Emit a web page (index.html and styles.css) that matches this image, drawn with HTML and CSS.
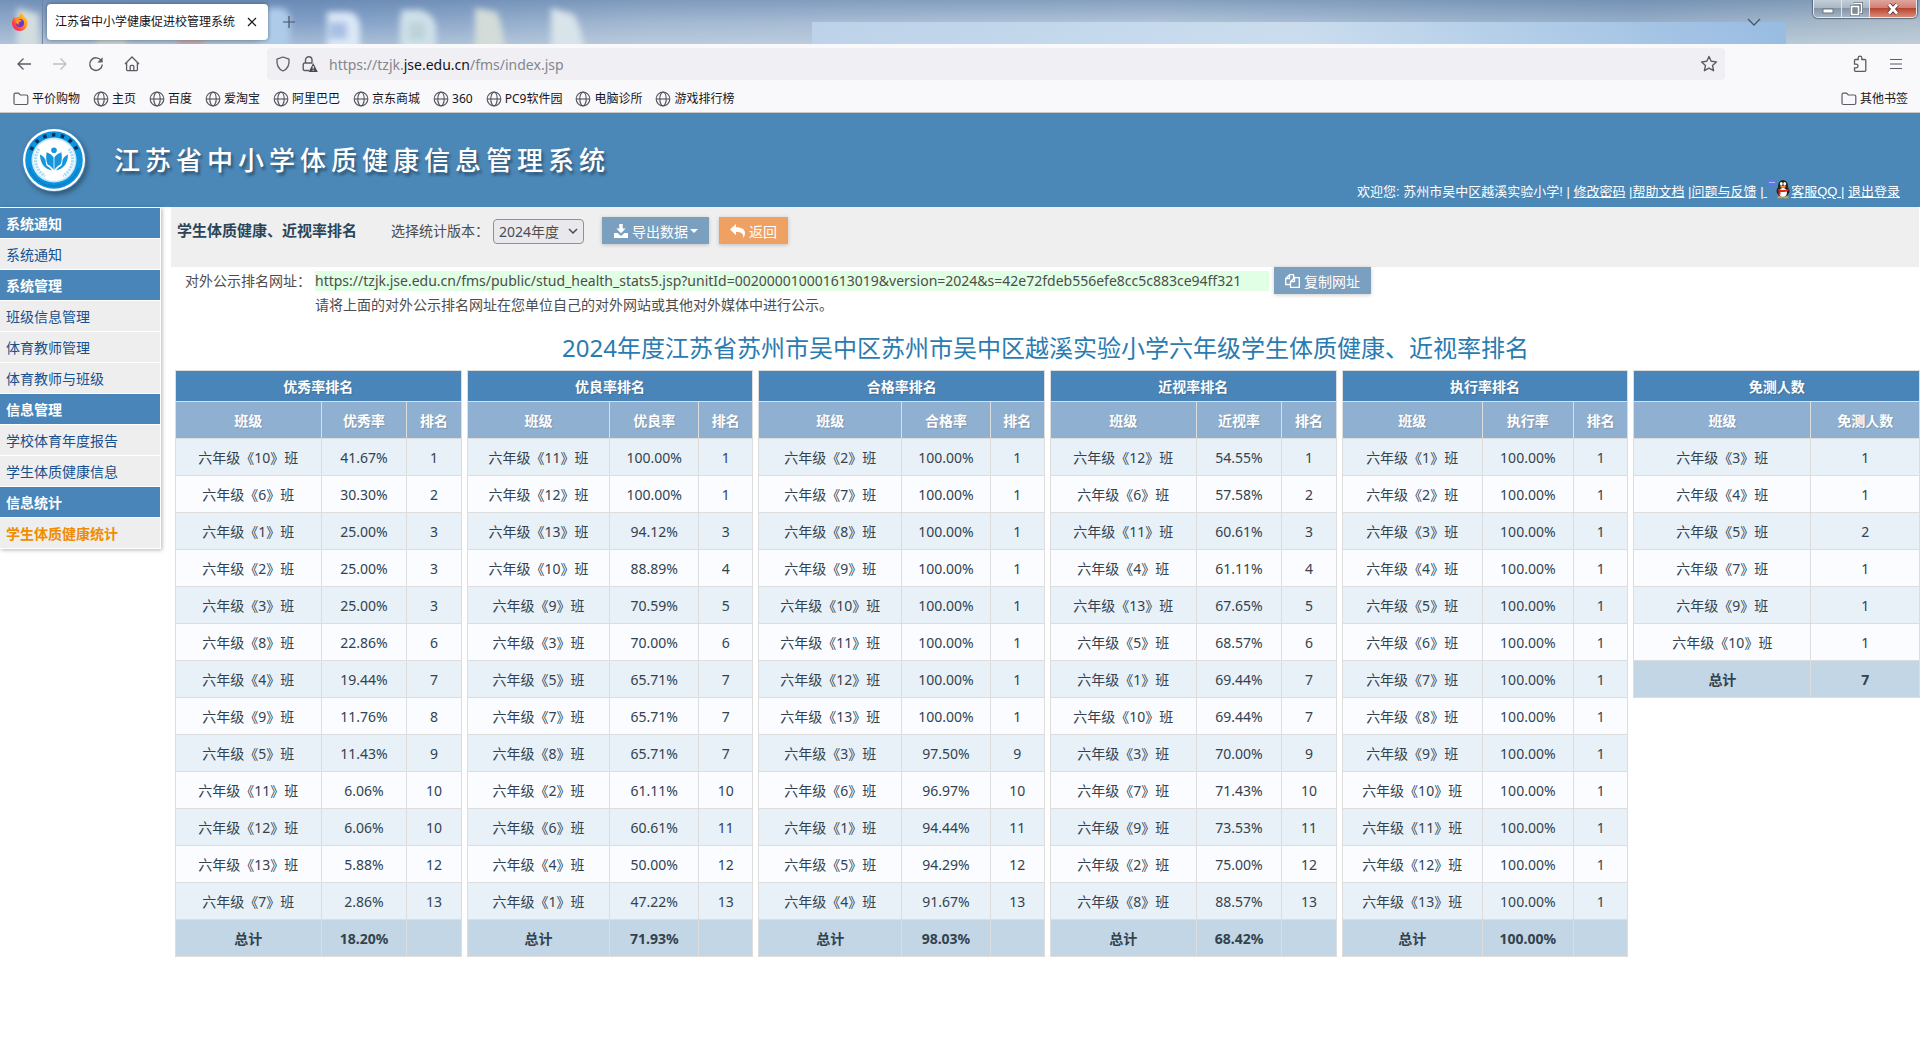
FILE: index.html
```html
<!DOCTYPE html>
<html lang="zh-CN">
<head>
  <meta charset="UTF-8">
  <meta name="viewport" content="width=device-width, initial-scale=1.0">
  <title>江苏省中小学健康促进校管理系统</title>
  <link rel="stylesheet" href="styles.css">
</head>
<body>
  <svg class="sprite" aria-hidden="true">
    <symbol id="globe" viewBox="0 0 16 16">
      <g fill="none" stroke="#5b5b66" stroke-width="1.2">
        <circle cx="8" cy="8" r="6.8"/>
        <ellipse cx="8" cy="8" rx="3.2" ry="6.8"/>
        <path d="M1.2 8h13.6"/>
      </g>
    </symbol>
    <symbol id="folder" viewBox="0 0 16 16">
      <path d="M1 3.6a1.5 1.5 0 0 1 1.500-1.500h3l1.800 1.900h6a1.500 1.500 0 0 1 1.500 1.500v6.500a1.500 1.500 0 0 1-1.500 1.500h-10.800a1.500 1.500 0 0 1-1.500-1.500z" fill="none" stroke="#5b5b66" stroke-width="1.2"/>
    </symbol>
  </svg>

  <div class="tab-strip">
    <!-- desktop icons showing through the glass -->
    <svg class="glass-bg" width="620" height="44" viewBox="0 0 620 44" aria-hidden="true">
      <defs><filter id="soft" x="-10%" y="-50%" width="120%" height="200%"><feGaussianBlur stdDeviation="3"/></filter></defs>
      <g filter="url(#soft)">
        <path d="M17 8l22 6v34H17z" fill="#d3dde0"/>
        <path d="M96 38h30v10H96z" fill="#c9d2cf"/>
        <path d="M178 40h26v8h-26z" fill="#c99f9a"/>
        <rect x="258" y="8" width="32" height="44" rx="10" fill="#aecbe9"/>
        <path d="M327 12h22q11 2 11 16v24h-33z" fill="#dbe8f6"/>
        <rect x="329" y="22" width="18" height="17" fill="#a9c0e4"/>
        <path d="M402 10h18q15 4 16 18v24h-36V20z" fill="#cfe0e8"/>
        <rect x="409" y="22" width="16" height="18" fill="#bdd3da"/>
        <path d="M475 8l22 4q6 14 8 40h-30z" fill="#d3dcd9"/>
        <path d="M551 8l22 6q9 12 11 38h-33z" fill="#d8e3ea"/>
      </g>
    </svg>
    <div class="glass-btns">
      <button class="win-btn" aria-label="最小化"><svg width="12" height="12" viewBox="0 0 12 12"><rect x="1" y="6" width="10" height="4" fill="#fff" stroke="#6b7480" stroke-width="1"/></svg></button>
      <button class="win-btn" aria-label="还原"><svg width="14" height="14" viewBox="0 0 14 14"><path d="M4.500 1.500h8v9h-2" fill="none" stroke="#5c6672" stroke-width="3"/><path d="M4.500 1.500h8v9h-2" fill="none" stroke="#fff" stroke-width="1.500"/><rect x="2.500" y="4.500" width="7" height="8" fill="#7d8b9b" stroke="#5c6672" stroke-width="3"/><rect x="2.500" y="4.500" width="7" height="8" fill="none" stroke="#fff" stroke-width="1.800"/></svg></button>
      <button class="win-btn win-close" aria-label="关闭"><svg width="14" height="12" viewBox="0 0 14 12"><path d="M3 1.500l8 9M11 1.500l-8 9" stroke="#5a3030" stroke-width="4.500"/><path d="M3 1.500l8 9M11 1.500l-8 9" stroke="#fff" stroke-width="2.800"/></svg></button>
    </div>
    <div class="fx">
      <svg width="18" height="20" viewBox="0 0 18 20">
        <defs><linearGradient id="fire" x1="1" y1="0" x2="0" y2="1"><stop offset="0" stop-color="#ffe340"/><stop offset=".4" stop-color="#ff9a20"/><stop offset=".75" stop-color="#ff3a4a"/><stop offset="1" stop-color="#e21e70"/></linearGradient></defs>
        <path d="M10.500 1c2 1.500 2.500 3 3 4 1.500.8 3 3.500 3 6 0 4.500-3.500 8-7.700 8S1 15.500 1 11c0-3 1-5 2-6.500.2 1 .5 1.500 1 2 1-1 2.500-1.300 3.500-1.200.7-1.600 1.500-3.300 3-4.300z" fill="url(#fire)"/>
        <circle cx="9" cy="11" r="4" fill="#6a35d8"/>
        <path d="M4.500 7.500c1.500-1 3-.8 4.500.5l2 .5-2 1.500c-1.500.3-2 1.500-.5 2.500-2 .4-4.500-1.500-4-5z" fill="#ff9520"/>
      </svg>
    </div>
    <div class="tab">
      <span>江苏省中小学健康促进校管理系统</span>
      <button class="plain" aria-label="关闭标签页"><svg width="10" height="10" viewBox="0 0 10 10"><path d="M1 1l8 8M9 1l-8 8" stroke="#15141a" stroke-width="1.200"/></svg></button>
    </div>
    <button class="plain new-tab" aria-label="新建标签页"><svg width="12" height="12" viewBox="0 0 12 12"><path d="M6 0v12M0 6h12" stroke="#4a5568" stroke-width="1.200"/></svg></button>
    <button class="plain all-tabs" aria-label="列出所有标签页"><svg width="14" height="8" viewBox="0 0 14 8"><path d="M1 1l6 6 6-6" fill="none" stroke="#4a5568" stroke-width="1.300"/></svg></button>
  </div>

  <div class="nav-bar">
    <button class="tool" aria-label="后退"><svg width="16" height="16" viewBox="0 0 16 16"><path d="M15 8H2M7.500 2.500L2 8l5.500 5.500" fill="none" stroke="#5b5b66" stroke-width="1.300"/></svg></button>
    <button class="tool" aria-label="前进"><svg width="16" height="16" viewBox="0 0 16 16"><path d="M1 8h13M8.500 2.500L14 8l-5.500 5.500" fill="none" stroke="#bdbdc4" stroke-width="1.300"/></svg></button>
    <button class="tool" aria-label="刷新"><svg width="16" height="16" viewBox="0 0 16 16"><path d="M13.500 5A6.300 6.300 0 1 0 14.300 8.500" fill="none" stroke="#5b5b66" stroke-width="1.400"/><path d="M14.600 1.200v5.300H9.300z" fill="#5b5b66"/></svg></button>
    <button class="tool" aria-label="主页"><svg width="16" height="16" viewBox="0 0 16 16"><path d="M1 8l7-7 7 7M2.600 6.500v7a1.200 1.200 0 0 0 1.200 1.200h8.400a1.200 1.200 0 0 0 1.200-1.200v-7M6.200 14.500V10.300a1 1 0 0 1 1-1h1.600a1 1 0 0 1 1 1v4.200" fill="none" stroke="#5b5b66" stroke-width="1.300"/></svg></button>
    <div class="url-bar">
      <svg width="16" height="16" viewBox="0 0 16 16"><path d="M8 1l6 2.200c.5 5-1.500 9.800-6 11.800C3.500 13 1.500 8.200 2 3.200z" fill="none" stroke="#5b5b66" stroke-width="1.300" stroke-linejoin="round"/></svg>
      <svg width="16" height="16" viewBox="0 0 16 16"><path d="M3.500 7V4a3 3 0 0 1 6.500 0v3M7 14.500H2.500A1.300 1.300 0 0 1 1.200 13.200V8.300A1.300 1.300 0 0 1 2.500 7H10.500" fill="none" stroke="#5b5b66" stroke-width="1.400"/><path d="M11.200 7l4.600 9H6.600z" fill="#4a4a55"/><path d="M11.200 10v2.800M11.200 13.700v1" stroke="#fff" stroke-width="1.100"/></svg>
      <span class="url">https://tzjk.<b>jse.edu.cn</b>/fms/index.jsp</span>
      <svg class="star" width="18" height="18" viewBox="0 0 18 18"><path d="M9 1.500l2.200 4.800 5.200.6-3.900 3.500 1.100 5.300L9 13.100l-4.600 2.600 1.100-5.300L1.600 6.900l5.200-.6z" fill="none" stroke="#5b5b66" stroke-width="1.400" stroke-linejoin="round"/></svg>
    </div>
    <button class="tool" aria-label="扩展"><svg width="16" height="18" viewBox="0 0 16 18"><path d="M2.500 7.500V5.500a1 1 0 0 1 1-1h2.700V3a1.800 1.800 0 0 1 3.600 0v1.500h3a1 1 0 0 1 1 1v9.800a1 1 0 0 1-1 1H3.500a1 1 0 0 1-1-1v-2.500h1.700a1.800 1.800 0 0 0 0-3.600H2.500z" fill="none" stroke="#5b5b66" stroke-width="1.300"/></svg></button>
    <button class="tool" aria-label="菜单"><svg width="14" height="12" viewBox="0 0 14 12"><path d="M1 1.500h12M1 6h12M1 10.500h12" stroke="#5b5b66" stroke-width="1.200"/></svg></button>
  </div>

  <div class="bookmarks">
    <a href="#"><svg width="16" height="16"><use href="#folder"/></svg>平价购物</a>
    <a href="#"><svg width="16" height="16"><use href="#globe"/></svg>主页</a>
    <a href="#"><svg width="16" height="16"><use href="#globe"/></svg>百度</a>
    <a href="#"><svg width="16" height="16"><use href="#globe"/></svg>爱淘宝</a>
    <a href="#"><svg width="16" height="16"><use href="#globe"/></svg>阿里巴巴</a>
    <a href="#"><svg width="16" height="16"><use href="#globe"/></svg>京东商城</a>
    <a href="#"><svg width="16" height="16"><use href="#globe"/></svg>360</a>
    <a href="#"><svg width="16" height="16"><use href="#globe"/></svg>PC9软件园</a>
    <a href="#"><svg width="16" height="16"><use href="#globe"/></svg>电脑诊所</a>
    <a href="#"><svg width="16" height="16"><use href="#globe"/></svg>游戏排行榜</a>
    <a class="other" href="#"><svg width="16" height="16"><use href="#folder"/></svg>其他书签</a>
  </div>

  <header class="header">
    <svg class="logo" width="64" height="64" viewBox="0 0 64 64">
      <circle cx="32" cy="32" r="31" fill="#fff"/>
      <circle cx="32" cy="32" r="28.800" fill="#0d93de"/>
      <path d="M9 22A25 25 0 0 1 55 22" fill="none" stroke="#0c2f55" stroke-width="3.500" stroke-dasharray="3.500 5.500"/>
      <path d="M7.500 40A25.700 25.700 0 0 0 56.500 40" fill="none" stroke="#0a6fb4" stroke-width="2" stroke-dasharray="1 1"/>
      <circle cx="32" cy="32" r="22.500" fill="#c4e8fb"/>
      <circle cx="32" cy="32" r="20.800" fill="#fff"/>
      <g fill="none" stroke="#a5daf7" stroke-width="3" stroke-dasharray="2 1"><path d="M17 21a18.500 18.500 0 0 0 6 27"/><path d="M47 21a18.500 18.500 0 0 1-6 27"/></g>
      <g fill="#1796dd">
        <circle cx="32" cy="22.300" r="2.800"/>
        <path d="M31.600 42V29.500c-1.500-2.500-4-4-7-5.200-.8 5-.5 9 1 12.200 2.500 1.200 4.500 3 6 5.500z"/>
        <path d="M32.400 42V29.500c1.500-2.500 4-4 7-5.200.8 5 .5 9-1 12.200-2.500 1.200-4.500 3-6 5.500z"/>
        <path d="M23.500 32c-1-2.500-3-4.500-5.500-5.500 0 7 3 14 12 16-1.500-2-3-3.500-5.300-4.700-.7-1.800-1.200-3.800-1.200-5.800z"/>
        <path d="M40.500 32c1-2.500 3-4.500 5.500-5.500 0 7-3 14-12 16 1.500-2 3-3.500 5.300-4.700.7-1.800 1.200-3.800 1.200-5.800z"/>
      </g>
    </svg>
    <h1>江苏省中小学体质健康信息管理系统</h1>
    <div class="user-links">
      欢迎您: 苏州市吴中区越溪实验小学! | <a href="#">修改密码</a> |<a href="#">帮助文档</a> |<a href="#">问题与反馈</a> |<a href="#">&nbsp;<svg width="24" height="20" viewBox="0 0 24 20"><ellipse cx="5" cy="3.500" rx="4.500" ry="3.200" fill="#5a7be0"/><path d="M2.500 3.500h5" stroke="#fff" stroke-dasharray="1 1"/><ellipse cx="16" cy="7" rx="5" ry="6" fill="#222"/><ellipse cx="16" cy="12" rx="6.500" ry="5.500" fill="#222"/><ellipse cx="16" cy="13.500" rx="4" ry="4.500" fill="#fff"/><ellipse cx="14.300" cy="4.800" rx="1.400" ry="1.900" fill="#fff"/><ellipse cx="17.700" cy="4.800" rx="1.400" ry="1.900" fill="#fff"/><ellipse cx="16" cy="7.800" rx="3" ry="1.100" fill="#f5a01c"/><path d="M10.500 9.500c3 2 8 2 11 0v2.200c-3 1.500-6 1.600-8 1.200v2.600h-2V12z" fill="#e2231a"/><path d="M10.500 17.500h5v1.800h-5zM16.500 17.500h5v1.800h-5z" fill="#f5a01c"/></svg>客服QQ&nbsp;</a>| <a href="#">退出登录</a>
    </div>
  </header>

  <div class="page">
    <nav class="sidebar">
      <h3>系统通知</h3>
      <a href="#">系统通知</a>
      <h3>系统管理</h3>
      <a href="#">班级信息管理</a>
      <a href="#">体育教师管理</a>
      <a href="#">体育教师与班级</a>
      <h3>信息管理</h3>
      <a href="#">学校体育年度报告</a>
      <a href="#">学生体质健康信息</a>
      <h3>信息统计</h3>
      <a href="#" class="active">学生体质健康统计</a>
    </nav>

    <main class="main">
      <div class="toolbar">
        <h2>学生体质健康、近视率排名</h2>
        <label for="version">选择统计版本：</label>
        <div class="select-wrap">
          <select id="version"><option>2024年度</option></select>
          <svg width="10" height="6" viewBox="0 0 10 6"><path d="M1 1l4 4 4-4" fill="none" stroke="#4c4c55" stroke-width="1.500"/></svg>
        </div>
        <button class="btn export"><svg width="14" height="14" viewBox="0 0 14 14"><path d="M5.300 0h3.400v4.500h3L7 9.300 2.300 4.500h3zM0 9h3.600L7 12l3.400-3H14v5H0z" fill="#fff"/></svg>导出数据<i class="caret"></i></button>
        <button class="btn btn-orange"><svg width="15" height="14" viewBox="0 0 15 14"><path d="M6 0v3.300c6 0 9 2.200 9 6 0 2-.8 3.500-1.800 4.700.5-4.200-1.500-6-7.200-6v3.300L0 5.600z" fill="#fff"/></svg>返回</button>
      </div>

      <div class="publish">
        <span class="publish-label">对外公示排名网址：</span>
        <div class="publish-url">
          <span class="link-text">https://tzjk.jse.edu.cn/fms/public/stud_health_stats5.jsp?unitId=002000010001613019&amp;version=2024&amp;s=42e72fdeb556efe8cc5c883ce94ff321</span>
          <button class="btn"><svg width="15" height="14" viewBox="0 0 15 14"><path d="M4.500.7h4v3.500M4.500.7L.7 4.500v6h4.800M.7 4.500h3.800V.7M9.500 3.700h4.800v9.600H5.500V7.500l4-3.800v3.800h-4" fill="none" stroke="#fff" stroke-width="1.300"/></svg>复制网址</button>
        </div>
        <p>请将上面的对外公示排名网址在您单位自己的对外网站或其他对外媒体中进行公示。</p>
      </div>

      <h2 class="report-title">2024年度江苏省苏州市吴中区苏州市吴中区越溪实验小学六年级学生体质健康、近视率排名</h2>
      <div class="tables" id="tables"></div>
    </main>
  </div>

  <script>
    // rows: [class number, value, rank]
    const tables = [
      { title: '优秀率排名', cols: ['班级', '优秀率', '排名'], size: 'w-a', total: '18.20%', rows: [
        [10, '41.67%', 1], [6, '30.30%', 2], [1, '25.00%', 3], [2, '25.00%', 3], [3, '25.00%', 3],
        [8, '22.86%', 6], [4, '19.44%', 7], [9, '11.76%', 8], [5, '11.43%', 9], [11, '6.06%', 10],
        [12, '6.06%', 10], [13, '5.88%', 12], [7, '2.86%', 13]] },
      { title: '优良率排名', cols: ['班级', '优良率', '排名'], size: 'w-b', total: '71.93%', rows: [
        [11, '100.00%', 1], [12, '100.00%', 1], [13, '94.12%', 3], [10, '88.89%', 4], [9, '70.59%', 5],
        [3, '70.00%', 6], [5, '65.71%', 7], [7, '65.71%', 7], [8, '65.71%', 7], [2, '61.11%', 10],
        [6, '60.61%', 11], [4, '50.00%', 12], [1, '47.22%', 13]] },
      { title: '合格率排名', cols: ['班级', '合格率', '排名'], size: 'w-b', total: '98.03%', rows: [
        [2, '100.00%', 1], [7, '100.00%', 1], [8, '100.00%', 1], [9, '100.00%', 1], [10, '100.00%', 1],
        [11, '100.00%', 1], [12, '100.00%', 1], [13, '100.00%', 1], [3, '97.50%', 9], [6, '96.97%', 10],
        [1, '94.44%', 11], [5, '94.29%', 12], [4, '91.67%', 13]] },
      { title: '近视率排名', cols: ['班级', '近视率', '排名'], size: 'w-a', total: '68.42%', rows: [
        [12, '54.55%', 1], [6, '57.58%', 2], [11, '60.61%', 3], [4, '61.11%', 4], [13, '67.65%', 5],
        [5, '68.57%', 6], [1, '69.44%', 7], [10, '69.44%', 7], [3, '70.00%', 9], [7, '71.43%', 10],
        [9, '73.53%', 11], [2, '75.00%', 12], [8, '88.57%', 13]] },
      { title: '执行率排名', cols: ['班级', '执行率', '排名'], size: 'w-c', total: '100.00%',
        rows: [1, 2, 3, 4, 5, 6, 7, 8, 9, 10, 11, 12, 13].map(n => [n, '100.00%', 1]) },
      { title: '免测人数', cols: ['班级', '免测人数'], size: 'w-d', total: '7', rows: [
        [3, 1], [4, 1], [5, 2], [7, 1], [9, 1], [10, 1]] }
    ];

    document.getElementById('tables').innerHTML = tables.map(t => {
      const body = t.rows.map(([cls, ...rest]) =>
        `<tr><td>六年级《${cls}》班</td>${rest.map(v => `<td>${v}</td>`).join('')}</tr>`).join('');
      const last = t.cols.length === 3 ? '<td></td>' : '';
      return `<table class="rank ${t.size}">
        <colgroup>${t.cols.map(() => '<col>').join('')}</colgroup>
        <thead>
          <tr class="caption"><th colspan="${t.cols.length}">${t.title}</th></tr>
          <tr>${t.cols.map(c => `<th>${c}</th>`).join('')}</tr>
        </thead>
        <tbody>${body}</tbody>
        <tfoot><tr><td>总计</td><td>${t.total}</td>${last}</tr></tfoot>
      </table>`;
    }).join('');
  </script>
</body>
</html>
```
FILE: styles.css
```css
* {
  box-sizing: border-box;
}
body {
  margin: 0;
  font-family: "Noto Sans", "Noto Sans CJK SC", sans-serif;
  font-size: 14px;
  line-height: 20px;
  color: #4d4d4d;
  background: #fff;
}
h1, h2, h3, p {
  margin: 0;
}
button, select {
  font-family: inherit;
  font-size: 14px;
}
svg {
  flex: none;
}
.sprite {
  display: none;
}

/* browser window */
.tab-strip {
  position: relative;
  display: flex;
  align-items: center;
  height: 44px;
  overflow: hidden;
  background:
    linear-gradient(to right, rgba(190, 212, 235, 0.9), rgba(205, 223, 240, 0.9) 50%, rgba(150, 188, 228, 0.9)) 812px 22px / 974px 22px no-repeat,
    linear-gradient(to bottom, rgba(80, 115, 160, 0.4), rgba(255, 255, 255, 0.05) 50%, rgba(220, 230, 235, 0.45)),
    linear-gradient(to right, #8ba6c8, #7b9ac4 16%, #9db4cf 34%, #abc0d6 60%, #8ea8c4 85%, #a8bac8);
}
.glass-bg {
  position: absolute;
  top: 0;
  left: 0;
}
.fx {
  position: relative;
  display: flex;
  align-items: center;
  justify-content: center;
  width: 43px;
  height: 44px;
  padding-right: 3px;
  border-right: 1px solid #6f85a3;
}
.tab {
  position: relative;
  display: flex;
  align-items: center;
  justify-content: space-between;
  width: 221px;
  height: 36px;
  margin-left: 4px;
  padding: 0 11px 0 8px;
  border-radius: 4px;
  background: #fff;
  box-shadow: 0 0 4px rgba(0, 0, 0, 0.4);
  font-size: 12px;
  color: #15141a;
}
.plain {
  position: relative;
  display: flex;
  padding: 0;
  border: none;
  background: none;
}
.new-tab {
  margin-left: 15px;
}
.all-tabs {
  margin-left: auto;
  margin-right: 159px;
}
.glass-btns {
  position: absolute;
  top: 0;
  right: 3px;
  display: flex;
  height: 18px;
  border: 1px solid #e4ebf2;
  border-top: none;
  border-radius: 0 0 5px 5px;
  overflow: hidden;
  box-shadow: 0 0 1px 1px #5c6b7c;
}
.win-btn {
  display: flex;
  align-items: center;
  justify-content: center;
  width: 28px;
  padding: 0;
  border: none;
  border-right: 1px solid #dfe7ee;
  background: linear-gradient(#c3ced9, #a9b7c6 45%, #8594a6 50%, #a5b5c4);
}
.win-close {
  width: 46px;
  border-right: none;
  background: linear-gradient(#dfa59c, #cf8276 45%, #b9452f 50%, #d88b78);
}
.nav-bar {
  display: flex;
  align-items: center;
  height: 40px;
  padding: 0 6px;
  background: #f9f9fb;
}
.tool {
  display: flex;
  align-items: center;
  justify-content: center;
  width: 36px;
  height: 32px;
  padding: 0;
  border: none;
  background: none;
}
.url-bar {
  flex: 1;
  display: flex;
  align-items: center;
  gap: 11px;
  height: 32px;
  margin: 0 117px 0 117px;
  padding: 0 7px 0 8px;
  border-radius: 4px;
  background: #f0f0f4;
}
.url {
  padding-top: 1px;
  font-size: 14px;
  color: #85858d;
}
.url b {
  font-weight: normal;
  color: #15141a;
}
.star {
  margin-left: auto;
}
.bookmarks {
  display: flex;
  align-items: center;
  gap: 13px;
  height: 29px;
  padding: 1px 12px 0 13px;
  border-bottom: 1px solid #c8c8cc;
  background: #f9f9fb;
}
.bookmarks a {
  display: flex;
  align-items: center;
  gap: 3px;
  font-size: 12px;
  color: #15141a;
  text-decoration: none;
}
.bookmarks .other {
  margin-left: auto;
}

/* site header */
.header {
  display: flex;
  align-items: center;
  height: 94px;
  padding: 0 20px 0 22px;
  background: #4b88b8;
  color: #fff;
}
.logo {
  border-radius: 50%;
  box-shadow: 2px 3px 5px rgba(0, 0, 0, 0.35);
}
.header h1 {
  margin-left: 28px;
  padding-bottom: 1px;
  font-size: 26px;
  font-weight: 500;
  line-height: 36px;
  letter-spacing: 5px;
  text-shadow: 2px 3px 3px rgba(0, 0, 0, 0.4);
}
.user-links {
  align-self: flex-end;
  margin-left: auto;
  padding-bottom: 5px;
  font-family: "Liberation Sans", "Noto Sans CJK SC", sans-serif;
  font-size: 13px;
  white-space: nowrap;
}
.user-links a {
  color: #fff;
}
.user-links svg {
  vertical-align: -3px;
}

/* layout */
.page {
  display: flex;
  align-items: flex-start;
}
.sidebar {
  flex: none;
  width: 161px;
  border-top: 1px solid #fff;
  border-right: 1px solid #fff;
  box-shadow: 1px 1px 4px rgba(0, 0, 0, 0.3);
}
.sidebar h3,
.sidebar a {
  display: block;
  height: 31px;
  padding-left: 6px;
  border-bottom: 1px solid #fff;
  font-size: 14px;
  line-height: 32px;
}
.sidebar h3 {
  background: #4985b8;
  color: #fff;
}
.sidebar a {
  background: #eee;
  color: #16508e;
  text-decoration: none;
}
.sidebar .active {
  font-weight: bold;
  color: #f08c00;
}
.main {
  flex: 1;
  min-width: 0;
  margin-left: 10px;
}
.toolbar {
  display: flex;
  align-items: flex-start;
  height: 60px;
  margin-right: 1px;
  padding: 10px 6px;
  background: #efefef;
  line-height: 27px;
}
.toolbar h2 {
  margin-right: 34px;
  font-size: 15px;
  line-height: 27px;
  color: #2b4558;
}
.select-wrap {
  position: relative;
  height: 25px;
  margin: 1px 18px 0 4px;
}
.select-wrap select {
  width: 91px;
  height: 25px;
  padding: 0 5px;
  border: 1px solid #8f8f9d;
  border-radius: 4px;
  background: #e9e9ed;
  color: #4d4d4d;
  appearance: none;
}
.select-wrap svg {
  position: absolute;
  right: 6px;
  top: 10px;
}
.btn {
  display: flex;
  align-items: center;
  gap: 4px;
  flex: none;
  height: 27px;
  padding: 0 11px;
  border: none;
  background: #7a9fbf;
  color: #fff;
  box-shadow: 0 1px 4px rgba(0, 0, 0, 0.2);
  cursor: pointer;
}
.export {
  margin-right: 10px;
  padding-left: 12px;
}
.btn-orange {
  background: #eea163;
}
.caret {
  margin-left: -2px;
  border: 4px solid transparent;
  border-top-color: #fff;
  border-bottom: none;
}
.publish {
  display: grid;
  grid-template-columns: 130px 1fr;
  row-gap: 1px;
  padding-left: 14px;
  line-height: 27px;
}
.publish-url {
  display: flex;
  align-items: center;
  gap: 5px;
}
.link-text {
  min-width: 954px;
  background: #e1ffe4;
  line-height: 20px;
}
.publish p {
  grid-column: 2;
  line-height: 20px;
}
.report-title {
  margin: 15px 0 4px;
  font-size: 24px;
  font-weight: normal;
  line-height: 36px;
  text-align: center;
  color: #2a7bb0;
}

/* ranking tables */
.tables {
  display: grid;
  grid-template-columns: repeat(6, 1fr);
  align-items: start;
  gap: 5px;
  margin-left: 4px;
}
.rank {
  width: 100%;
  table-layout: fixed;
  border-collapse: collapse;
  color: #32434f;
  text-align: center;
}
.rank th,
.rank td {
  height: 37px;
  padding: 1px 0 0;
  border: 1px solid #ddd;
}
.rank th {
  background: #8fb0d0;
  color: #fff;
  text-shadow: 1px 1px 1px rgba(0, 0, 0, 0.15);
}
.rank .caption th {
  height: 31px;
  background: #4985b8;
}
.rank tbody tr:nth-child(odd) {
  background: #e8f0f8;
}
.rank tbody tr:nth-child(even) {
  background: #fafcff;
}
.rank tfoot {
  background: #c2d6e5;
  font-weight: bold;
}
.w-a col:nth-child(1) { width: 51%; }
.w-a col:nth-child(2) { width: 30%; }
.w-b col:nth-child(1) { width: 50%; }
.w-b col:nth-child(2) { width: 31%; }
.w-c col:nth-child(1) { width: 49%; }
.w-c col:nth-child(2) { width: 32%; }
.w-d col:nth-child(1) { width: 62%; }
```
